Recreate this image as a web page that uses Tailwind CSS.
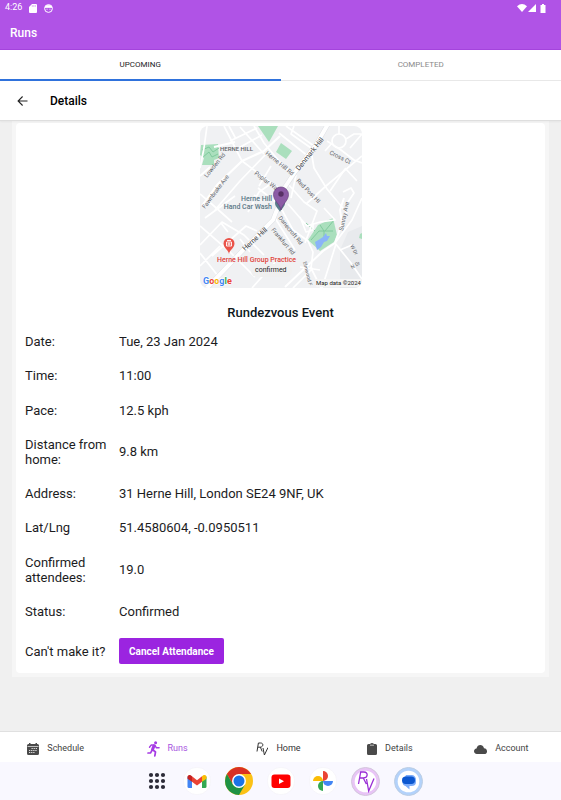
<!DOCTYPE html>
<html lang="en">
  <head>
    <meta charset="UTF-8" />
    <meta name="viewport" content="width=device-width, initial-scale=1.0" />
    <title>Runs - Details</title>
    <script src="https://cdn.jsdelivr.net/npm/@tailwindcss/browser@4"></script>
  </head>
  <body class="min-h-screen flex flex-col bg-[#f0f0f0] font-[Roboto,sans-serif] text-[#1c1c1e]">
    <header class="bg-[#b053e6] text-white border-b border-[#a444dc]">
      <!-- Status bar -->
      <div class="flex items-center justify-between h-4 pl-[5px] pr-[14px]">
        <div class="flex items-center gap-[7px] text-[9px]">
          <span>4:26</span>
          <svg class="w-2 h-[9px]" viewBox="0 0 8 9" fill="#fff">
            <path d="M3 0h4q1 0 1 1v7q0 1-1 1H1q-1 0-1-1V3z" />
            <path d="M3.3 1.2v1.6M4.8 1.2v1.6M6.3 1.2v1.6" stroke="#b053e6" stroke-width=".5" />
          </svg>
          <svg class="w-[9px] h-[9px]" viewBox="0 0 9 9" fill="none" stroke="#fff">
            <circle cx="4.5" cy="4.5" r="3.9" />
            <path d="M1 3.3C1.6 1 7.4 1 8 3.3z" fill="#fff" />
            <path d="M3 5.2h.1M5.9 5.2H6" stroke-linecap="round" />
          </svg>
        </div>
        <div class="flex items-center gap-px">
          <svg class="w-[10px] h-2" viewBox="0 0 10 8" fill="#fff">
            <path d="M0 2.2Q5-2 10 2.2L5 8z" />
          </svg>
          <svg class="w-2 h-2" viewBox="0 0 8 8" fill="#fff">
            <path d="M8 0v8H0z" />
          </svg>
          <svg class="w-2 h-[9px] ml-[2px]" viewBox="0 0 8 9" fill="#fff">
            <path d="M1.500 1H3V0h2v1h1.500v8h-5z" />
          </svg>
        </div>
      </div>
      <h1 class="px-[10px] h-[33px] flex items-center text-[12px] font-medium">Runs</h1>
    </header>

    <!-- Tabs -->
    <nav class="grid grid-cols-2 h-[31px] bg-white text-[8px] text-center">
      <a href="#upcoming" class="flex items-center justify-center border-b-2 border-[#2f72dc]">UPCOMING</a>
      <a href="#completed" class="flex items-center justify-center border-b border-[#e8e8e8] text-[#8a8a8a]">COMPLETED</a>
    </nav>

    <!-- Title bar -->
    <div class="flex items-center h-10 pl-4 gap-5 bg-white border-b border-[#dedede] shadow-xs relative">
      <button type="button" aria-label="Back" class="w-[14px] h-[14px]">
        <svg viewBox="0 0 14 14" fill="none" stroke="#222" stroke-width="1.1">
          <path d="M11.500 7H2.200M6.600 2.500 2.100 7l4.500 4.500" />
        </svg>
      </button>
      <h2 class="text-[12px] font-medium text-black">Details</h2>
    </div>

    <main class="flex-1">
      <div class="mx-3 px-1 pt-[2px] pb-1 bg-[#f6f6f6]">
        <section class="bg-white rounded-sm px-[9px] pt-[3px]">
          <!-- Map -->
          <svg class="block mx-auto w-[162px] h-[162px] rounded-lg" viewBox="0 0 162 162" font-family="Roboto, sans-serif">
            <rect width="162" height="162" fill="#f0f1f3" />
            <path d="M140 124l8-18 14-6v62h-22z" fill="#e8eaed" />
            <g fill="#aadfbd">
              <path d="M1 19l17-1 1 14-5 2v5H2l2-7-4-3z" />
              <path d="M58 0h20l-9 16z" />
              <path d="M81 17l11 8-6 8-10-7z" />
              <path d="M108 114l10-15 15-7 4 17-3 7-14 9z" />
              <path d="M160 108l2-1v6l-3-1z" />
            </g>
            <path d="M2 24l7-3 4 5 6-4M3 31l6-5 3 5 6-3M111 114l8-9 14 0M120 99l4 6 0 6M134 94l-9 11M106 97l9 8" fill="none" stroke="#7cc79a" stroke-width=".9" />
            <path d="M115 116l5-3 3-2 3-4 1 3 3 0-3 5-3 1-3 5-4 3z" fill="#8ab4f8" />

            <!-- Side streets -->
            <g fill="none" stroke="#fff" stroke-width="1.700" stroke-linejoin="round">
              <path d="M7 0L4 22 0 42M24 0l18 35 32 24 8 5" />
              <path d="M80 10L64 25 42 35 18 58 2 80M14 21l21-5" stroke-width="2.200" />
              <path d="M30 15L57 2M35 24L62 9M40 1l24 27M54 0l10 17 20 24 12 8M0 50l10-9M29 0l7 13" />
              <path d="M66 28L40 55l-25 29M48 86l11-20 10-7M58 62l20 16M54 69l8 6M0 68l14 12 18 16M71 40l-12 20" />
              <path d="M86 0l28 20M94 0l-3 8 20 14M79 7l30 24M111 24l3 18 13 21 20 24M127 15l14 9 13 10 8 3M162 30l-36 30-20 18" />
              <circle cx="139" cy="15" r="7" />
              <path d="M139 0v8M146 13l8-5 8 0M132 17l-7 8M150 22L162 8M145 42l12 13M130 65l15-22M96 49l-5 23M88 58l16 18 13 9-12 32M143 66l8-4 3 5-8 12" />
              <path d="M144 72l-4 12 2 13-7 20-12 8-38 36" stroke-width="2" />
              <path d="M162 72l-10 22-17 23M135 117l16 20 11 16M136 118l-14 44M124 82l11 12-15 2-13 4-19-22M100 91l6 15 7-2 0-7" />
              <path d="M0 100l30 26 25 25M0 119l22-23 22 13 20 20M5 92l30-22M40 113l10 13M12 130l34-30 11 5M0 127l22 28M28 106l-7-9M0 140l20-20M52 162l26-29" />
              <path d="M82 84l11 20 15 11 5 11-2 16 10 20M75 92l20 32M100 141l20 3M140 124l12-5M93 162l20-20" />
            </g>
            <!-- Main road -->
            <path d="M128-2L116 19 95 46 83 64 78 81 73 94 45 122 27 141 6 163" fill="none" stroke="#dfe1e5" stroke-width="5" />
            <path d="M128-2L116 19 95 46 83 64 78 81 73 94 45 122 27 141 6 163" fill="none" stroke="#fff" stroke-width="4" />

            <g fill="#5f6368" font-size="6">
              <text x="20" y="25" font-weight="500">HERNE HILL</text>
              <text transform="translate(7 52) rotate(-51)">Lowden Rd</text>
              <text transform="translate(5 83) rotate(-53)">Fawnbrake Ave</text>
              <text transform="translate(65 28) rotate(39)">Herne Hill Rd</text>
              <text transform="translate(54 48) rotate(37)">Poplar Walk</text>
              <text transform="translate(99 45) rotate(-51)" font-size="7" fill="#3c4043">Denmark Hill</text>
              <text transform="translate(129 28) rotate(26)">Cross Ct</text>
              <text transform="translate(96 55) rotate(46)">Red Post Hl</text>
              <text transform="translate(78 92) rotate(51)">Danecroft Rd</text>
              <text transform="translate(71 104) rotate(50)">Frankfurt Rd</text>
              <text transform="translate(143 105) rotate(-78)">Sunray Ave</text>
              <text transform="translate(103 136) rotate(76)" font-size="5">Elmwood F</text>
              <text transform="translate(150 120) rotate(60)" font-size="5">W Dr</text>
              <text transform="translate(152 143) rotate(-30)" font-size="5">N Dr</text>
              <text transform="translate(45 125) rotate(-42)" font-size="7" fill="#3c4043">Herne Hill</text>
            </g>
            <g font-size="7" font-weight="500" fill="#5b7886" stroke="#f0f1f3" stroke-width="1.500" paint-order="stroke">
              <text x="72" y="75" text-anchor="end">Herne Hill</text>
              <text x="72" y="83" text-anchor="end">Hand Car Wash</text>
            </g>
            <path d="M80 86c-1-3-5-5-5-9a5 5 0 0 1 10 0c0 4-4 6-5 9z" fill="#5b7d8c" />
            <path d="M81 84c-1-6-7.500-9-7.500-15.500a7.500 7.500 0 0 1 15 0C88.500 75 82 78 81 84z" fill="#8c5ba5" stroke="#68417f" stroke-width=".7" />
            <circle cx="81" cy="68" r="2.700" fill="#573064" />
            <path d="M29 128c-.6-4-5.500-6-5.500-10.500a5.500 5.500 0 0 1 11 0C34.500 122 29.600 124 29 128z" fill="#ea5349" />
            <path d="M26.500 120h5v-4h-5zM27 114.500h4M29 116.500v3M27.500 118h3" fill="none" stroke="#fff" stroke-width=".9" />
            <rect x="51" y="138" width="41" height="13" rx="6" fill="#f0f0f0" />
            <text x="17" y="136" font-size="7" font-weight="500" fill="#e0433a" stroke="#f0f1f3" stroke-width="1.200" paint-order="stroke">Herne Hill Group Practice</text>
            <text x="55" y="146" font-size="7" fill="#222">confirmed</text>
            <text x="3" y="158" font-size="9" font-weight="700" stroke="#fff" stroke-width="1" paint-order="stroke"><tspan fill="#4285f4">G</tspan><tspan fill="#ea4335">o</tspan><tspan fill="#f5b400">o</tspan><tspan fill="#4285f4">g</tspan><tspan fill="#34a853">l</tspan><tspan fill="#ea4335">e</tspan></text>
            <rect x="116" y="153" width="46" height="8" fill="#f5f5f5" />
            <text x="161" y="159" text-anchor="end" font-size="6" fill="#222">Map data ©2024</text>
          </svg>

          <h3 class="h-9 pt-[15px] mb-0 text-[13px] leading-5 font-medium text-center text-[#0d1720]">Rundezvous Event</h3>

          <table class="w-full text-[13px] leading-[15px] text-left">
            <tbody>
              <tr class="h-[34px]">
                <th class="w-[94px] pr-2 font-normal">Date:</th>
                <td>Tue, 23 Jan 2024</td>
              </tr>
              <tr class="h-[35px]">
                <th class="pr-2 font-normal">Time:</th>
                <td>11:00</td>
              </tr>
              <tr class="h-[34px]">
                <th class="pr-2 font-normal">Pace:</th>
                <td>12.5 kph</td>
              </tr>
              <tr class="h-[49px]">
                <th class="pr-2 font-normal">Distance from home:</th>
                <td>9.8 km</td>
              </tr>
              <tr class="h-[34px]">
                <th class="pr-2 font-normal">Address:</th>
                <td>31 Herne Hill, London SE24 9NF, UK</td>
              </tr>
              <tr class="h-[35px]">
                <th class="pr-2 font-normal">Lat/Lng</th>
                <td>51.4580604, -0.0950511</td>
              </tr>
              <tr class="h-[49px]">
                <th class="pr-2 font-normal">Confirmed attendees:</th>
                <td>19.0</td>
              </tr>
              <tr class="h-[35px]">
                <th class="pr-2 font-normal">Status:</th>
                <td>Confirmed</td>
              </tr>
              <tr class="h-11">
                <th class="font-normal whitespace-nowrap">Can't make it?</th>
                <td>
                  <button type="button" class="block h-[26px] px-[10px] rounded-xs bg-[#9b24e0] text-white text-[10px] font-bold">
                    Cancel Attendance
                  </button>
                </td>
              </tr>
            </tbody>
          </table>
        </section>
      </div>
    </main>

    <!-- Bottom navigation -->
    <nav class="grid grid-cols-5 h-[31px] pt-1 pr-1 bg-white border-t border-[#e0e0e0] text-[9px] text-[#444]">
      <a href="#schedule" class="flex items-center justify-center gap-2">
        <svg class="w-3 h-3" viewBox="0 0 12 12">
          <path d="M1.500 1H2V0h1.500v1h5V0H10v1h.5q1.500 0 1.500 1.500v8Q12 12 10.500 12h-9Q0 12 0 10.500v-8Q0 1 1.500 1z" fill="#4a4a4a" />
          <path d="M.5 3.500h11" stroke="#ddd" stroke-width=".8" />
          <path d="M4.500 5.500h5.500M2 7.500h8M2 9.500h6" stroke="#ddd" stroke-width="1.100" stroke-dasharray="1.300 .8" />
        </svg>
        Schedule
      </a>
      <a href="#runs" class="flex items-center justify-center gap-2 text-[#a855e0]">
        <svg class="w-[13px] h-4" viewBox="0 0 13 16" fill="none" stroke="#a63be4" stroke-width="1.700" stroke-linecap="round" stroke-linejoin="round">
          <circle cx="8.600" cy="1.700" r="1.500" fill="#a63be4" stroke="none" />
          <path d="M2.500 6.200l1.800-2.300 3.500.3 1.600 2.600h2.700" stroke-width="1.400" />
          <path d="M7 4.800L5.500 8.600" stroke-width="3" />
          <path d="M6 9l2.500 2-.7 3.800M4.600 9.800L3.600 12H1" />
        </svg>
        Runs
      </a>
      <a href="#home" class="flex items-center justify-center gap-2 text-[#333]">
        <svg class="w-3 h-[14px]" viewBox="0 0 12 14" fill="none" stroke="#333">
          <path d="M1 9.500L2.400 1h2.200C8 1 7.300 5.200 4.200 5.200H1.900M4.400 5.200l1.800 4.300M7 6l1.400 7L12 5.500" />
        </svg>
        Home
      </a>
      <a href="#details" class="flex items-center justify-center gap-2">
        <svg class="w-[10px] h-3" viewBox="0 0 10 12" fill="#4a4a4a">
          <path d="M1.500 1H3q2-2 4 0h1.500Q10 1 10 2.500v8Q10 12 8.500 12h-7Q0 12 0 10.500v-8Q0 1 1.500 1z" />
          <path d="M3 2.200h4" stroke="#ddd" stroke-width=".8" />
        </svg>
        Details
      </a>
      <a href="#account" class="flex items-center justify-center gap-2">
        <svg class="w-[13px] h-[9px]" viewBox="0 0 13 9" fill="#4a4a4a">
          <path d="M3 9C-1 9-.8 3.800 2.500 3.500 3.500-1.100 9-1 10 3.300c4 .2 4 5.700.2 5.700z" />
        </svg>
        Account
      </a>
    </nav>

    <!-- System dock -->
    <footer class="flex items-center justify-center gap-[14px] h-[38px] pl-[6px] bg-[#f9f8ff]">
      <button type="button" aria-label="All apps" class="w-6 h-6">
        <svg viewBox="2 2 24 24" fill="#2c2b38">
          <circle cx="8" cy="8" r="2.100" /><circle cx="14" cy="8" r="2.100" /><circle cx="20" cy="8" r="2.100" />
          <circle cx="8" cy="14" r="2.100" /><circle cx="14" cy="14" r="2.100" /><circle cx="20" cy="14" r="2.100" />
          <circle cx="8" cy="20" r="2.100" /><circle cx="14" cy="20" r="2.100" /><circle cx="20" cy="20" r="2.100" />
        </svg>
      </button>
      <button type="button" aria-label="Gmail" class="w-7 h-7">
        <svg viewBox="0 0 28 28">
          <circle cx="14" cy="14" r="13.700" fill="#fff" stroke="#f1f0f7" stroke-width=".6" />
          <path d="M4.500 9.500l4.500 3v8.500H6Q4.500 21 4.500 19.500z" fill="#4285f4" />
          <path d="M23.500 9.500l-4.500 3v8.500h3q1.500 0 1.500-1.500z" fill="#34a853" />
          <path d="M19 9.300l1.300-1c1.500-1 3.200 0 3.200 1.500v2l-4.500 3z" fill="#fbbc04" />
          <path d="M9 9.300l-1.300-1C6.200 7.300 4.500 8.300 4.500 9.800v2l4.500 3z" fill="#c5221f" />
          <path d="M9 9.300l5 3.900 5-3.900v5.500l-5 3.800-5-3.800z" fill="#ea4335" />
        </svg>
      </button>
      <button type="button" aria-label="Chrome" class="w-7 h-7">
        <svg viewBox="0 0 28 28">
          <circle cx="14" cy="14" r="14" fill="#fbc116" />
          <path d="M1.900 7A14 14 0 0 1 26.100 7H14L8 17.500z" fill="#d93025" />
          <path d="M1.900 7A14 14 0 0 0 14 28l6.100-10.500H8z" fill="#1e9245" />
          <circle cx="14" cy="14" r="7" fill="#fff" />
          <circle cx="14" cy="14" r="5.500" fill="#1a73e8" />
        </svg>
      </button>
      <button type="button" aria-label="YouTube" class="w-7 h-7">
        <svg viewBox="0 0 28 28">
          <circle cx="14" cy="14" r="13.700" fill="#fff" stroke="#f1f0f7" stroke-width=".6" />
          <rect x="4.500" y="7.500" width="19" height="13.500" rx="3" fill="#f00" />
          <path d="M12 11.500l5 2.800-5 2.800z" fill="#fff" />
        </svg>
      </button>
      <button type="button" aria-label="Photos" class="w-7 h-7">
        <svg viewBox="0 0 28 28">
          <circle cx="14" cy="14" r="13.700" fill="#fff" stroke="#f1f0f7" stroke-width=".6" />
          <path d="M14 4a5 5 0 0 1 0 10z" fill="#ea4335" />
          <path d="M24 14a5 5 0 0 1-10 0z" fill="#4285f4" />
          <path d="M14 24a5 5 0 0 1 0-10z" fill="#34a853" />
          <path d="M4 14a5 5 0 0 1 10 0z" fill="#fbbc04" />
        </svg>
      </button>
      <button type="button" aria-label="Rundezvous" class="w-[29px] h-[29px]">
        <svg viewBox="0 0 29 29">
          <circle cx="14.500" cy="14.500" r="14" fill="#e8c4f6" stroke="#d3c7dc" />
          <circle cx="14.500" cy="14.500" r="10.800" fill="#fff" />
          <path d="M7.500 17L9.700 5h3.200c4.800 0 4 6-.4 6H8.800M12.300 11l3 6M15.500 12l2.200 12L23 11.500" fill="none" stroke="#9a2fd6" stroke-width="1.300" />
        </svg>
      </button>
      <button type="button" aria-label="Messages" class="w-[29px] h-[29px]">
        <svg viewBox="0 0 29 29">
          <circle cx="14.500" cy="14.500" r="14" fill="#b3d2fb" stroke="#bccde2" />
          <circle cx="14.500" cy="14.500" r="10.800" fill="#fff" />
          <path d="M12 8h5.500a4.500 4.500 0 0 1 4.500 5v2q0 4-4.500 4h-2v3.500L11.500 19q-3-.5-3-4z" fill="#7aabfa" />
          <rect x="8" y="9.500" width="13" height="7.500" rx="3.750" fill="#0b57d0" />
        </svg>
      </button>
    </footer>
  </body>
</html>
